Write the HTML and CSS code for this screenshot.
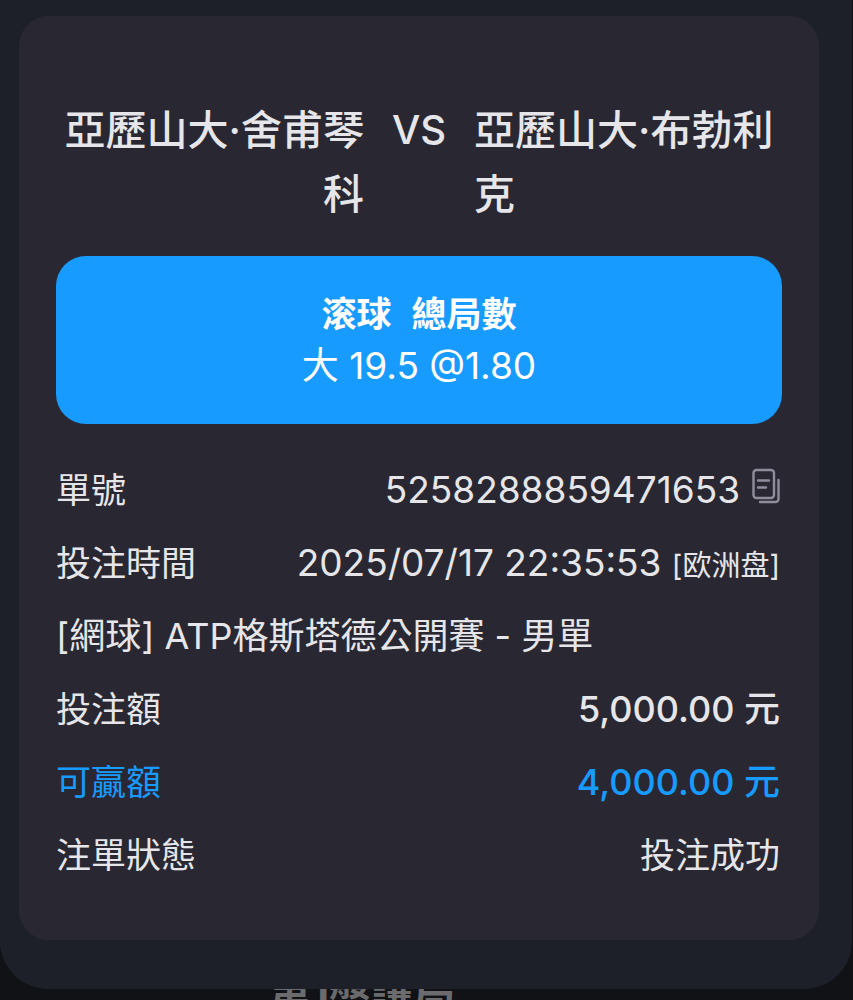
FILE: index.html
```html
<!DOCTYPE html>
<html lang="zh-Hant">
<head>
<meta charset="utf-8">
<meta name="viewport" content="width=device-width, initial-scale=1">
<title>注單</title>
<link rel="stylesheet" href="styles.css">
</head>
<body>
<main class="sheet">
  <article class="card">
    <h1 class="match">
      <span class="team team-home">亞歷山大·舍甫琴科</span>
      <span class="versus">VS</span>
      <span class="team">亞歷山大·布勃利克</span>
    </h1>
    <section class="pick">
      <h2 class="pick-market"><span lang="zh-Hans">滚球</span><span>總局數</span></h2>
      <p class="pick-odds">大 19.5 @1.80</p>
    </section>
    <dl class="details">
      <div class="row">
        <dt>單號</dt>
        <dd class="figure order">5258288859471653
          <button class="copy" type="button" aria-label="複製單號">
            <svg class="copy-icon" viewBox="0 0 28 36" fill="none" stroke="currentColor" stroke-width="2.400" stroke-linecap="round" aria-hidden="true">
              <rect x="1.500" y="2" width="20.500" height="28" rx="3"/>
              <path d="M6 12.500h11M6 19.500h8"/>
              <path d="M26.500 12v19a3 3 0 0 1-3 3H8"/>
            </svg>
          </button>
        </dd>
      </div>
      <div class="row">
        <dt>投注時間</dt>
        <dd class="figure">2025/07/17 22:35:53 <small class="zone">[欧洲盘]</small></dd>
      </div>
      <div class="row"><dt class="event">[網球] ATP格斯塔德公開賽 - 男單</dt></div>
      <div class="row"><dt>投注額</dt><dd class="amount">5,000.00 元</dd></div>
      <div class="row row-win"><dt>可贏額</dt><dd class="amount">4,000.00 元</dd></div>
      <div class="row"><dt>注單狀態</dt><dd>投注成功</dd></div>
    </dl>
  </article>
</main>
<p class="behind">第1盤讓局</p>
</body>
</html>
```
FILE: styles.css
```css
* { box-sizing: border-box; }
body {
  margin: 0;
  height: 100vh;
  overflow: hidden;
  background: #111216;
  color: #e6e6ea;
  font-family: Inter, "Noto Sans CJK TC", sans-serif;
  font-size: 35px;
  line-height: 52px;
}
.sheet {
  position: relative;
  z-index: 1;
  margin-right: 1px;
  padding: 16px 33px 49px 19px;
  border-radius: 0 0 48px 48px;
  background: #1e2029;
}
.card {
  padding: 82px 37px 59px;
  border-radius: 30px;
  background: #292832;
}
.match {
  display: grid;
  grid-template-columns: 1fr auto 1fr;
  gap: 28px;
  margin: 0;
  font-size: 41px;
  font-weight: 500;
  line-height: 64px;
}
.team-home { text-align: right; }
.versus { font-size: 40px; }
.pick {
  margin-top: 30px;
  padding: 32px 16px;
  border-radius: 30px;
  background: #189bff;
  color: #fff;
  text-align: center;
}
.pick-market {
  display: flex;
  justify-content: center;
  gap: 20px;
  margin: 0;
  font-size: 35px;
  font-weight: 700;
}
.pick-odds { margin: 0; font-size: 37px; }
.details {
  display: grid;
  gap: 21px;
  margin: 40px 0 0;
  padding-right: 2px;
}
.row {
  display: flex;
  justify-content: space-between;
  height: 52px;
  white-space: nowrap;
}
.row dd { margin: 0; }
.row .figure { font-size: 37px; }
.row .event, .row .amount { font-size: 36px; }
.order { display: flex; gap: 12px; }
.copy {
  display: flex;
  padding: 4px 0 0;
  border: 0;
  background: none;
  color: #8f8d9b;
  cursor: pointer;
}
.copy-icon { width: 28px; height: 36px; }
.zone { font-size: 29px; font-family: Inter, "Noto Sans CJK SC", sans-serif; }
.row .amount { font-weight: 500; }
.row-win { color: #189bff; }
.behind {
  margin: -20px 129px 0 0;
  color: #6b6b6d;
  font-size: 42px;
  font-weight: 700;
  text-align: center;
}
```
